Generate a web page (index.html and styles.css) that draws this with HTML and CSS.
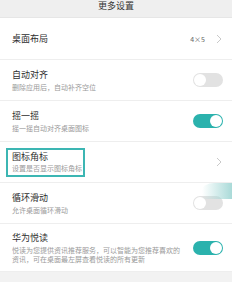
FILE: index.html
```html
<!DOCTYPE html>
<html>
<head>
<meta charset="utf-8">
<link rel="stylesheet" href="styles.css">
</head>
<body>
<div class="page">
  <div class="header">更多设置</div>
  <div class="row r1">
    <div class="text"><div class="title">桌面布局</div></div>
    <div class="right"><span class="value">4×5</span><svg class="chev" width="6" height="10" viewBox="0 0 6 10"><polyline points="1,1 5,5 1,9" fill="none" stroke="#c9c9c9" stroke-width="1"/></svg></div>
  </div>
  <div class="row">
    <div class="text"><div class="title">自动对齐</div><div class="sub">删除应用后，自动补齐空位</div></div>
    <div class="toggle"><span class="knob"></span></div>
  </div>
  <div class="row">
    <div class="text"><div class="title">摇一摇</div><div class="sub">摇一摇自动对齐桌面图标</div></div>
    <div class="toggle on"><span class="knob"></span></div>
  </div>
  <div class="row">
    <div class="text boxed"><div class="title">图标角标</div><div class="sub">设置是否显示图标角标</div></div>
    <div class="right"><svg class="chev" width="6" height="10" viewBox="0 0 6 10"><polyline points="1,1 5,5 1,9" fill="none" stroke="#c9c9c9" stroke-width="1"/></svg></div>
  </div>
  <div class="row">
    <div class="text"><div class="title">循环滑动</div><div class="sub">允许桌面循环滑动</div></div>
    <div class="toggle"><span class="knob"></span></div>
  </div>
  <div class="row r6">
    <div class="text wide"><div class="title">华为悦读</div><div class="sub">悦读为您提供资讯推荐服务，可以智能为您推荐喜欢的资讯，可在桌面最左屏查看悦读的所有更新</div></div>
    <div class="toggle on"><span class="knob"></span></div>
  </div>
  <div class="glow"></div>
</div>
</body>
</html>
```
FILE: styles.css
```css
* { box-sizing: border-box; }
html, body { margin: 0; padding: 0; }
body {
  width: 232px;
  height: 282px;
  overflow: hidden;
  background: #f2f2f2;
  font-family: "Noto Sans CJK SC", "Noto Sans", sans-serif;
}
.page { position: relative; width: 232px; height: 282px; }
.header {
  height: 18px;
  background: #efefef;
  text-align: center;
  font-size: 9px;
  line-height: 12px;
  color: #333;
  border-bottom: 1px solid #e6e6e6;
}
.row {
  display: flex;
  align-items: center;
  justify-content: space-between;
  height: 41px;
  padding: 0 9px 0 12px;
  background: #fff;
  border-bottom: 1px solid #eeeeee;
}
.row.r1 { height: 42px; }
.row.r6 { height: 48px; }
.title { font-size: 9px; line-height: 11px; color: #2e2e2e; }
.sub { font-size: 7px; line-height: 9px; color: #9a9a9a; margin-top: 3px; }
.wide { width: 174px; }
.boxed {
  border: 2px solid #3cb6b3;
  margin-left: -6px;
  padding: 1px 1px 2px 4px;
}
.boxed .sub { margin-top: 2px; }
.right { display: flex; align-items: center; gap: 11px; }
.value { font-size: 7px; color: #666; }
.chev { display: block; margin-right: 1px; }
.toggle {
  position: relative;
  width: 30px;
  height: 14px;
  border-radius: 7px;
  background: #e2e2e2;
  flex-shrink: 0;
}
.toggle .knob {
  position: absolute;
  top: 1px;
  left: 1px;
  width: 12px;
  height: 12px;
  border-radius: 50%;
  background: #fff;
}
.toggle.on { background: #2bb2ad; }
.toggle.on .knob { left: 17px; }
.glow {
  position: absolute;
  right: 0;
  top: 183px;
  width: 30px;
  height: 16px;
  background: linear-gradient(to right, rgba(168, 218, 216, 0), rgba(160, 214, 212, 0.9));
  border-top-left-radius: 12px 8px;
}
```
